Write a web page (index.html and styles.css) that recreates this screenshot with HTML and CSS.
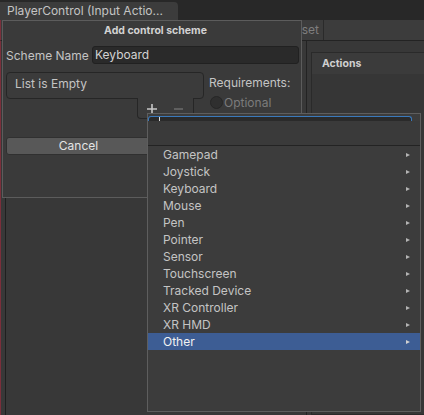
FILE: index.html
```html
<!DOCTYPE html>
<html>
<head>
<meta charset="utf-8">
<link rel="stylesheet" href="styles.css">
</head>
<body>
<div class="editor">
  <div class="tabbar"><div class="tab">PlayerControl (Input Actio...</div></div>
  <div class="toolbar"><div class="tb-save">Save Asset</div></div>
  <div class="main">
    <div class="left-panel"></div>
    <div class="actions-panel"><div class="ap-header">Actions</div></div>
  </div>
</div>

<div class="popup">
  <div class="popup-title">Add control scheme</div>
  <div class="field-row">
    <label class="field-label">Scheme Name</label>
    <div class="text-field">Keyboard</div>
  </div>
  <div class="list-row">
    <div class="list-col">
      <div class="list-box">List is Empty</div>
      <div class="list-footer">
        <span class="lf-btn"><svg width="10" height="10" viewBox="0 0 10 10"><path d="M5 0V10M0 5H10" stroke="#c8c8c8" stroke-width="1.6"/></svg></span>
        <span class="lf-btn"><svg width="9" height="10" viewBox="0 0 9 10"><path d="M0 5H9" stroke="#707070" stroke-width="1.4"/></svg></span>
      </div>
    </div>
    <div class="req-col">
      <div class="req-label">Requirements:</div>
      <div class="radio-row"><span class="radio"></span><span class="radio-text">Optional</span></div>
    </div>
  </div>
  <div class="btn-row">
    <div class="btn">Cancel</div>
    <div class="btn">Add</div>
  </div>
</div>

<div class="dropdown">
  <div class="dd-search"><span class="caret"></span></div>
  <div class="dd-header"></div>
  <div class="dd-list">
    <div class="dd-item"><span>Gamepad</span><i class="arrow"></i></div>
    <div class="dd-item"><span>Joystick</span><i class="arrow"></i></div>
    <div class="dd-item"><span>Keyboard</span><i class="arrow"></i></div>
    <div class="dd-item"><span>Mouse</span><i class="arrow"></i></div>
    <div class="dd-item"><span>Pen</span><i class="arrow"></i></div>
    <div class="dd-item"><span>Pointer</span><i class="arrow"></i></div>
    <div class="dd-item"><span>Sensor</span><i class="arrow"></i></div>
    <div class="dd-item"><span>Touchscreen</span><i class="arrow"></i></div>
    <div class="dd-item"><span>Tracked Device</span><i class="arrow"></i></div>
    <div class="dd-item"><span>XR Controller</span><i class="arrow"></i></div>
    <div class="dd-item"><span>XR HMD</span><i class="arrow"></i></div>
    <div class="dd-item selected"><span>Other</span><i class="arrow"></i></div>
  </div>
</div>
</body>
</html>
```

FILE: styles.css
```css
html, body {
  margin: 0;
  padding: 0;
}
body {
  width: 424px;
  height: 415px;
  overflow: hidden;
  position: relative;
  background: #282828;
  font-family: Inter, "Noto Sans", sans-serif;
  font-size: 12px;
  color: #c4c4c4;
}
.editor {
  display: flex;
  flex-direction: column;
  height: 415px;
}
.tabbar {
  height: 20px;
  display: flex;
  align-items: flex-end;
  background: #282828;
}
.tab {
  width: 178px;
  height: 18px;
  line-height: 18px;
  box-sizing: border-box;
  padding-left: 7px;
  background: #3c3c3c;
  border-top-right-radius: 4px;
  white-space: nowrap;
}
.toolbar {
  height: 20px;
  background: #3c3c3c;
  border-bottom: 1px solid #232323;
  display: flex;
  border-left: 1px solid #7b2f3b;
}
.tb-save {
  width: 323px;
  box-sizing: border-box;
  text-align: right;
  padding-right: 4px;
  line-height: 20px;
  color: #7e7e7e;
  border-right: 1px solid #2a2a2a;
}
.main {
  flex: 1;
  display: flex;
  background: #383838;
  border-left: 1px solid #7b2f3b;
  padding-left: 4px;
}
.left-panel {
  width: 300px;
  border-left: 1px solid #1f1f1f;
  border-right: 1px solid #232323;
}
.actions-panel {
  flex: 1;
  margin-left: 4px;
  margin-top: 11px;
  border: 1px solid #2a2a2a;
  border-right: none;
  background: #363636;
}
.ap-header {
  height: 21px;
  line-height: 21px;
  padding-left: 10px;
  font-weight: bold;
  font-size: 10.5px;
  color: #d0d0d0;
  background: #3b3b3b;
}

/* popup */
.popup {
  position: absolute;
  left: 2px;
  top: 20px;
  width: 300px;
  height: 178px;
  box-sizing: border-box;
  border: 1px solid #5c5c5c;
  background: #3a3a3a;
  padding: 0 2px 0 3px;
  display: flex;
  flex-direction: column;
}
.popup-title {
  height: 19px;
  line-height: 19px;
  text-align: center;
  padding-left: 6px;
  font-weight: bold;
  font-size: 10.5px;
  color: #d2d2d2;
}
.field-row {
  margin-top: 6px;
  display: flex;
  align-items: center;
  height: 18px;
}
.field-label {
  width: 86px;
  flex: none;
  color: #c4c4c4;
}
.text-field {
  flex: 1;
  height: 18px;
  box-sizing: border-box;
  line-height: 16px;
  padding-left: 2px;
  background: #2a2a2a;
  border: 1px solid #212121;
  border-radius: 3px;
  color: #d2d2d2;
}
.list-row {
  margin-top: 8px;
  display: flex;
}
.list-col {
  width: 198px;
  flex: none;
  display: flex;
  flex-direction: column;
}
.list-box {
  height: 27px;
  box-sizing: border-box;
  border: 1px solid #262626;
  border-radius: 4px;
  background: #3b3b3b;
  padding: 3px 0 0 8px;
  line-height: 15px;
  color: #c4c4c4;
}
.list-footer {
  margin-left: 131px;
  margin-top: -1px;
  width: 57px;
  height: 21px;
  box-sizing: border-box;
  border: 1px solid #262626;
  border-top: none;
  border-radius: 0 0 4px 4px;
  background: #3b3b3b;
  display: flex;
  align-items: center;
  gap: 4px;
  padding-left: 3px;
  padding-top: 1px;
  position: relative;
}
.lf-btn {
  width: 22px;
  height: 16px;
  display: flex;
  align-items: center;
  justify-content: center;
}
.req-col {
  margin-left: 5px;
  padding-top: 3px;
}
.req-label {
  line-height: 15px;
  color: #c4c4c4;
}
.radio-row {
  margin-top: 6px;
  display: flex;
  align-items: center;
  height: 13px;
  margin-left: 1px;
}
.radio {
  width: 13px;
  height: 13px;
  box-sizing: border-box;
  border-radius: 50%;
  background: #2f2f2f;
  border: 1px solid #262626;
}
.radio-text {
  margin-left: 1px;
  color: #7c7c7c;
  line-height: 13px;
}
.btn-row {
  margin-top: 18px;
  display: flex;
  gap: 3px;
}
.btn {
  flex: 1;
  height: 18px;
  box-sizing: border-box;
  line-height: 16px;
  text-align: center;
  background: #585858;
  border: 1px solid #303030;
  border-radius: 3px;
  color: #e4e4e4;
}

/* dropdown */
.dropdown {
  position: absolute;
  left: 147px;
  top: 113px;
  width: 274px;
  height: 299px;
  box-sizing: border-box;
  border: 1px solid #5e5e5e;
  background: #3c3c3c;
  display: flex;
  flex-direction: column;
}
.dd-search {
  margin: 2px 8px 0 0;
  height: 5px;
  box-sizing: border-box;
  border: 1px solid #3a79bb;
  border-bottom: none;
  border-radius: 3px 3px 0 0;
  background: #2a2a2a;
  display: flex;
}
.caret {
  margin-left: 10px;
  width: 1px;
  height: 4px;
  background: #dcdcdc;
}
.dd-header {
  height: 24px;
  border-bottom: 1px solid #232323;
  background: #3a3a3a;
}
.dd-list {
  display: flex;
  flex-direction: column;
}
.dd-item {
  height: 17px;
  line-height: 17px;
  padding: 0 10px 0 15px;
  display: flex;
  align-items: center;
  justify-content: space-between;
  color: #c4c4c4;
}
.dd-item.selected {
  background: #3d5d94;
  color: #f2f2f2;
}
.arrow {
  width: 0;
  height: 0;
  border-left: 4px solid #b4b4b4;
  border-top: 2.5px solid transparent;
  border-bottom: 2.5px solid transparent;
}
.dd-item.selected .arrow {
  border-left-color: #d0d0d0;
}
```
